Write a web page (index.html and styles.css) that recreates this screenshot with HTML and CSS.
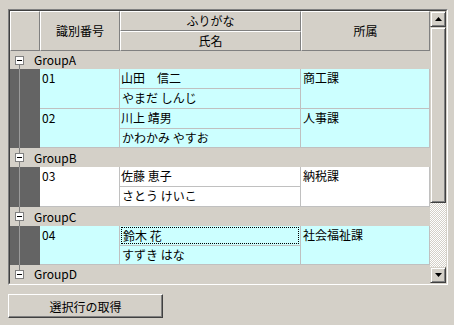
FILE: index.html
```html
<!DOCTYPE html>
<html lang="ja">
<head>
    <meta charset="UTF-8">
    <title>グループ表示</title>
    <link rel="stylesheet" href="styles.css">
</head>
<body>
    <div class="grid-frame">
        <div class="grid-inner">
            <div class="grid-body">
                <div class="grid-header">
                    <div class="hcell corner"></div>
                    <div class="hcell h-id">識別番号</div>
                    <div class="hcell h-kana">ふりがな</div>
                    <div class="hcell h-name">氏名</div>
                    <div class="hcell h-dept">所属</div>
                </div>

                <div class="group-row tall">
                    <div class="gutter first"><span class="tree-box"><span class="minus"></span></span></div>
                    <span class="group-label">GroupA</span>
                </div>
                <div class="record cyan">
                    <div class="rowhead"></div>
                    <div class="cell c-id">01</div>
                    <div class="cell c-name">山田　信二</div>
                    <div class="cell c-kana">やまだ しんじ</div>
                    <div class="cell c-dept">商工課</div>
                </div>
                <div class="record cyan short">
                    <div class="rowhead"></div>
                    <div class="cell c-id">02</div>
                    <div class="cell c-name">川上 靖男</div>
                    <div class="cell c-kana">かわかみ やすお</div>
                    <div class="cell c-dept">人事課</div>
                </div>

                <div class="group-row">
                    <div class="gutter"><span class="tree-box"><span class="minus"></span></span></div>
                    <span class="group-label">GroupB</span>
                </div>
                <div class="record">
                    <div class="rowhead"></div>
                    <div class="cell c-id">03</div>
                    <div class="cell c-name">佐藤 恵子</div>
                    <div class="cell c-kana">さとう けいこ</div>
                    <div class="cell c-dept">納税課</div>
                </div>

                <div class="group-row">
                    <div class="gutter"><span class="tree-box"><span class="minus"></span></span></div>
                    <span class="group-label">GroupC</span>
                </div>
                <div class="record cyan short">
                    <div class="rowhead"></div>
                    <div class="cell c-id">04</div>
                    <div class="cell c-name"><span class="focus">鈴木 花</span></div>
                    <div class="cell c-kana">すずき はな</div>
                    <div class="cell c-dept">社会福祉課</div>
                </div>

                <div class="group-row tall">
                    <div class="gutter last"><span class="tree-box"><span class="minus"></span></span></div>
                    <span class="group-label">GroupD</span>
                </div>
            </div>

            <div class="vscroll">
                <div class="sbtn">
                    <svg width="7" height="4" viewBox="0 0 7 4"><polygon points="3.5,0 7,4 0,4" fill="#000"/></svg>
                </div>
                <div class="thumb"></div>
                <div class="track"></div>
                <div class="sbtn">
                    <svg width="7" height="4" viewBox="0 0 7 4"><polygon points="0,0 7,0 3.5,4" fill="#000"/></svg>
                </div>
            </div>
        </div>
    </div>

    <button type="button" class="get-button">選択行の取得</button>
</body>
</html>
```

FILE: styles.css
```css
body {
    margin: 0;
    padding: 9px 8px;
    background-color: #d4d0c8;
    font-family: "Noto Sans CJK JP", sans-serif;
    font-size: 12px;
    color: #000;
}

.grid-frame {
    width: 440px;
    box-sizing: border-box;
    border: 1px solid;
    border-color: #808080 #fff #fff #808080;
}

.grid-inner {
    display: flex;
    border: 1px solid;
    border-color: #404040 #d4d0c8 #d4d0c8 #404040;
}

.grid-body {
    width: 420px;
    display: flex;
    flex-direction: column;
}

/* header */

.grid-header {
    display: grid;
    grid-template-columns: 30px 80px 181px 129px;
    grid-template-rows: 20px 20px;
}

.hcell {
    box-sizing: border-box;
    border: 1px solid;
    border-color: #fff #808080 #808080 #fff;
    background-color: #d4d0c8;
    display: flex;
    align-items: center;
    justify-content: center;
    line-height: 1;
}

.corner {
    grid-row: 1 / 3;
}

.h-id {
    grid-row: 1 / 3;
}

.h-kana {
    grid-column: 3;
    grid-row: 1;
}

.h-name {
    grid-column: 3;
    grid-row: 2;
}

.h-dept {
    grid-column: 4;
    grid-row: 1 / 3;
}

/* group rows */

.group-row {
    display: flex;
    align-items: center;
    height: 19px;
    background-color: #d4d0c8;
}

.group-row.tall {
    height: 18px;
}

.gutter {
    width: 30px;
    height: 100%;
    display: flex;
    align-items: center;
    background-image: linear-gradient(#808080, #808080);
    background-repeat: no-repeat;
    background-size: 1px 100%;
    background-position: 9px 0;
}

.gutter.first {
    background-size: 1px 50%;
    background-position: 9px 100%;
}

.gutter.last {
    background-size: 1px 50%;
    background-position: 9px 0;
}

.tree-box {
    width: 9px;
    height: 9px;
    margin-left: 5px;
    box-sizing: border-box;
    border: 1px solid #808080;
    background-color: #fff;
    display: flex;
    align-items: center;
    justify-content: center;
}

.minus {
    width: 5px;
    height: 1px;
    background-color: #000;
}

.group-label {
    margin-left: -6px;
    line-height: 1;
}

/* records */

.record {
    display: grid;
    grid-template-columns: 30px 80px 181px 129px;
    grid-template-rows: 20px 20px;
    background-color: #fff;
}

.record.short {
    grid-template-rows: 20px 19px;
}

.record.cyan {
    background-color: #ccffff;
}

.rowhead {
    grid-row: 1 / 3;
    background-color: #646464;
    background-image: linear-gradient(#9a9a9a, #9a9a9a);
    background-repeat: no-repeat;
    background-size: 1px 100%;
    background-position: 9px 0;
}

.cell {
    box-sizing: border-box;
    border-right: 1px solid #c0c0c0;
    border-bottom: 1px solid #c0c0c0;
    padding: 0 2px;
    line-height: 18px;
    white-space: nowrap;
}

.c-id {
    grid-column: 2;
    grid-row: 1 / 3;
}

.c-name {
    grid-column: 3;
    grid-row: 1;
    padding: 0 1px;
}

.c-kana {
    grid-column: 3;
    grid-row: 2;
}

.c-dept {
    grid-column: 4;
    grid-row: 1 / 3;
}

.focus {
    display: block;
    height: 17px;
    padding-left: 1px;
    border: 1px dotted #000;
    line-height: 16px;
    box-sizing: border-box;
    margin-top: 1px;
}

/* scrollbar */

.vscroll {
    width: 16px;
    display: flex;
    flex-direction: column;
}

.sbtn,
.thumb {
    box-sizing: border-box;
    background-color: #d4d0c8;
    border: 1px solid;
    border-color: #d4d0c8 #404040 #404040 #d4d0c8;
    box-shadow: inset 1px 1px #fff, inset -1px -1px #808080;
}

.sbtn {
    height: 16px;
    display: flex;
    align-items: center;
    justify-content: center;
}

.thumb {
    height: 176px;
}

.track {
    flex: 1;
    background: repeating-conic-gradient(#fff 0 25%, #d4d0c8 0 50%) 0 0 / 2px 2px;
}

/* button */

.get-button {
    display: block;
    margin-top: 9px;
    width: 155px;
    height: 24px;
    padding: 0;
    background-color: #d4d0c8;
    border: 1px solid;
    border-color: #fff #404040 #404040 #fff;
    box-shadow: inset -1px -1px #808080;
    font-family: "Noto Sans CJK JP", sans-serif;
    font-size: 12px;
    color: #000;
}
```
